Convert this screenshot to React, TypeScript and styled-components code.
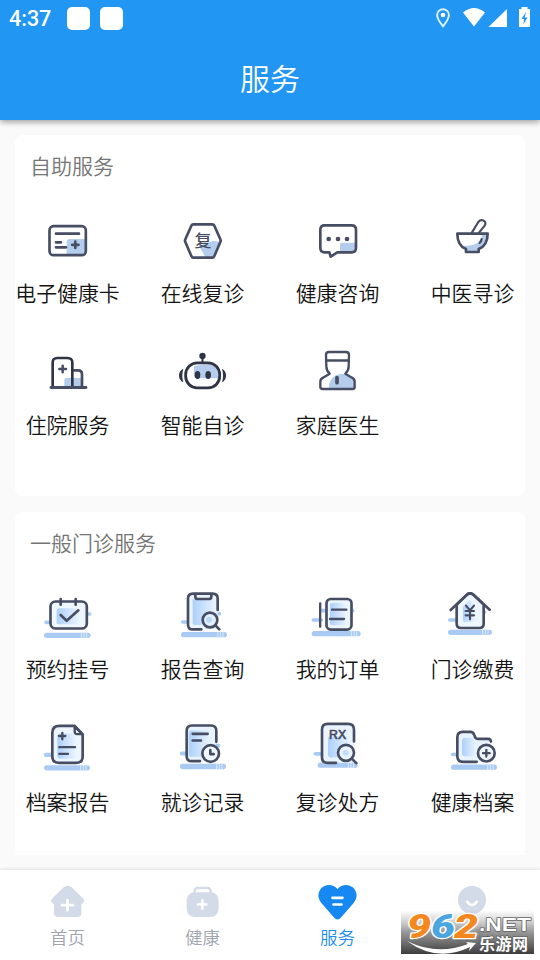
import React from "react";
import styled, { createGlobalStyle } from "styled-components";

const INK = "#474e64";
const DARK = "#2f3546";
const TINT = "#b4cdec";
const BAR = "#a9cbf3";

const Global = createGlobalStyle`
  * { box-sizing: border-box; }
  body { margin: 0; background: #fafafa; }
`;

const Screen = styled.div`
  width: 540px;
  height: 960px;
  display: flex;
  flex-direction: column;
  overflow: hidden;
  background: #fafafa;
  font-family: "Noto Sans CJK SC", sans-serif;
  font-weight: 350;
  color: #141414;
`;

const Header = styled.header`
  height: 120px;
  flex: none;
  z-index: 1;
  display: flex;
  flex-direction: column;
  background: #2196f3;
  color: #fff;
  box-shadow: 0 2px 6px rgba(0, 0, 0, 0.38);
`;

const StatusBar = styled.div`
  height: 38px;
  display: flex;
  align-items: center;
  padding: 0 10px 0 9px;
`;

const Clock = styled.span`
  width: 58px;
  font: 500 21.5px/38px Roboto, sans-serif;
`;

const Notice = styled.span`
  width: 23px;
  height: 23px;
  margin: 0 10px 1px 0;
  border-radius: 5px;
  background: #fff;
`;

const StatusIcons = styled.svg`
  width: 97px;
  height: 38px;
  margin-left: auto;
`;

const Title = styled.h1`
  margin: 0;
  text-align: center;
  font-size: 30px;
  font-weight: 350;
  line-height: 79px;
`;

const Content = styled.main`
  flex: 1;
  min-height: 0;
  display: flex;
  flex-direction: column;
  gap: 16px;
  padding: 15px 15px 0;
`;

const Card = styled.section<{ $height: number; $cut?: boolean }>`
  flex: none;
  height: ${(p) => p.$height}px;
  border-radius: ${(p) => (p.$cut ? "8px 8px 0 0" : "8px")};
  background: #fff;
`;

const CardTitle = styled.h2<{ $space: number }>`
  margin: 0 0 ${(p) => p.$space}px;
  padding: 15px 15px 0;
  font-size: 21px;
  line-height: 30px;
  font-weight: 350;
  color: #757575;
`;

const Grid = styled.div<{ $pitch: number }>`
  margin: 0 -15px;
  display: grid;
  grid-template-columns: repeat(4, 135px);
  grid-auto-rows: ${(p) => p.$pitch}px;
`;

const Service = styled.div`
  display: flex;
  flex-direction: column;
  align-items: center;
  gap: 9px;
`;

const ServiceIcon = styled.svg`
  width: 61px;
  height: 56px;
  overflow: visible;
  fill: none;
  stroke: ${INK};
  stroke-width: 8;
  stroke-linecap: round;
  stroke-linejoin: round;
`;

const Label = styled.span`
  font-size: 20.9px;
  line-height: 24px;
  white-space: nowrap;
`;

const NavBar = styled.nav`
  height: 90px;
  flex: none;
  display: grid;
  grid-template-columns: repeat(4, 1fr);
  background: #fff;
  box-shadow: 0 -1px 3px rgba(0, 0, 0, 0.1);
`;

const NavItem = styled.div<{ $active?: boolean }>`
  display: flex;
  flex-direction: column;
  align-items: center;
  padding-top: 10px;
  font-size: 17.5px;
  line-height: 24px;
  color: ${(p) => (p.$active ? "#1b8cf0" : "#a0a5b0")};
`;

const NavIcon = styled.svg`
  width: 45px;
  height: 45px;
`;

const Watermark = styled.svg`
  position: absolute;
  left: 401px;
  top: 910px;
  width: 133px;
  height: 44px;
`;

const Pencil = ({ x, y, w = 140 }: { x: number; y: number; w?: number }) => (
  <g stroke="none">
    <rect x={x} y={y - 8} width={w} height={16} rx={8} fill={BAR} />
    <path d={`M${x + w - 28} ${y - 8}v16M${x + w - 20} ${y - 8}v16M${x + w - 12} ${y - 8}v16`} stroke="#e4f0ff" strokeWidth={2.5} strokeLinecap="butt" />
  </g>
);

type Item = { label: string; x: number; y: number; art: React.ReactNode };

const selfService: Item[] = [
  {
    label: "电子健康卡", x: 111, y: 255,
    art: (
      <>
        <path d="M200 373V337q0-10 10-10h48v46z" fill={TINT} stroke="none" />
        <rect x="148.5" y="288.500" width="109" height="87" rx="12" />
        <path d="M168 311h69M168 337h15M168 352h30M226 335v19M216.500 344.500h19" />
      </>
    ),
  },
  {
    label: "在线复诊", x: 516, y: 255,
    art: (
      <>
        <path d="M597 347l43-15 18 4-21 45h-21z" fill={TINT} stroke="none" />
        <path d="M580 283h57q4 0 6 4l18 41q2 4 0 8l-18 42q-2 5-6 5h-57q-4 0-6-5l-18-42q-2-4 0-8l18-41q2-4 6-4z" />
        <text x="609" y="351" textAnchor="middle" fontSize="51" fontWeight="500" fill={INK} stroke="none">复</text>
      </>
    ),
  },
  {
    label: "健康咨询", x: 111, y: 255,
    art: (
      <>
        <path d="M210 366V343q0-5 5-5h42v28z" fill={TINT} stroke="none" />
        <path d="M164 286h81q13 0 13 13v55q0 13-13 13h-43l-20 13-4-13h-14q-13 0-13-13v-55q0-13 13-13z" />
        <g fill={INK} stroke="none"><circle cx="176" cy="327" r="7" /><circle cx="204" cy="327" r="7" /><circle cx="231" cy="327" r="7" /></g>
      </>
    ),
  },
  {
    label: "中医寻诊", x: 516, y: 255,
    art: (
      <>
        <path d="M582 347q30 1 42-10 16-16 10-25h19q1 34-27 45v9h-38v-9z" fill={TINT} stroke="none" />
        <path d="M562 311h91q0 35-27 46v9h-38v-9q-26-11-26-46z" />
        <path d="M606 307l19-31q7-9 16-4 9 6 3 15l-17 21M635 327q-1 7-6 12" strokeWidth="6.500" />
      </>
    ),
  },
  {
    label: "住院服务", x: 111, y: 81,
    art: (
      <>
        <path d="M193 200V180q0-6 6-6h46v26z" fill={TINT} stroke="none" />
        <path d="M219 151h15q12 0 12 12v37" strokeWidth="8" />
        <path d="M158 200V128q0-14 14-14h30q15 0 15 14v72" stroke={DARK} strokeWidth="8" />
        <path d="M153 202.500h105" strokeWidth="8.500" />
        <path d="M188 137v20M178 147h20" strokeWidth="7.500" />
      </>
    ),
  },
  {
    label: "智能自诊", x: 516, y: 81,
    art: (
      <g stroke={DARK}>
        <path d="M582 166v-28q20-5 42-5 32 4 32 37v5h-66q-8-2-8-9z" fill={TINT} stroke="none" />
        <rect x="557" y="128.500" width="102" height="75" rx="35" strokeWidth="8.500" />
        <path d="M607.500 108v20" strokeWidth="6" />
        <g fill={DARK} stroke="none">
          <circle cx="607.500" cy="108" r="9.500" />
          <ellipse cx="592.500" cy="165" rx="8.500" ry="12" />
          <ellipse cx="624.500" cy="165" rx="8.500" ry="12" />
          <path d="M550 146q-13 6-13 20.500t13 20.500q-6-20 0-41zM666 146q12 6 12 20.500t-12 20.500q6-20 0-41z" />
        </g>
      </g>
    ),
  },
  {
    label: "家庭医生", x: 111, y: 81,
    art: (
      <>
        <path d="M176 206q0-28 22-40 15-8 32-3l17 10q6 3 6 10v23z" fill={TINT} stroke="none" />
        <path d="M168 105q0-9 9-9h51q9 0 9 9l-1 34q0 13-10 22l20 12q8 4 8 12v16q0 6-6 6h-90q-7 0-7-6v-16q0-8 8-12l20-12q-10-9-10-22zM168 121.500h69" strokeWidth="7" />
        <path d="M201 173v15" strokeWidth="11" />
      </>
    ),
  },
];

const clinic: Item[] = [
  {
    label: "预约挂号", x: 111, y: 243,
    art: (
      <>
        <path d="M138 337h20M258 312h11" stroke={BAR} strokeWidth="11" />
        <Pencil x={132} y={376} />
        <rect x="151.500" y="274.500" width="109" height="81" rx="15" fill="#eef6ff" />
        <rect x="170" y="295" width="68" height="48" rx="8" fill="url(#tone)" stroke="none" />
        <path d="M182 267v17M227 267v17M182 315l18 17 35-31" />
      </>
    ),
  },
  {
    label: "报告查询", x: 516, y: 243,
    art: (
      <>
        <path d="M548 336h18M652 311h6" stroke={BAR} strokeWidth="11" />
        <Pencil x={543} y={374} w={138} />
        <path d="M563 260q0-10 12-10h64q14 0 14 14v94h-77q-13 0-13-13z" fill="#eaf4ff" stroke="none" />
        <rect x="578" y="265" width="70" height="80" rx="8" fill="url(#tone)" stroke="none" />
        <path d="M604 358h-26q-14 0-14-14v-78q0-15 15-15h59q15 0 15 15v34" />
        <path d="M586 254v6q0 7 8 7h32q8 0 8-7v-6" />
        <circle cx="630" cy="330" r="22" fill="#e4f0ff" /><circle cx="627" cy="329" r="9" fill="#b9d7fa" stroke="none" />
        <path d="M647 347l11 11" />
      </>
    ),
  },
  {
    label: "我的订单", x: 111, y: 243,
    art: (
      <>
        <path d="M130 330h24M153 302h12M240 302h8" stroke={BAR} strokeWidth="11" />
        <Pencil x={125} y={371} w={147} />
        <path d="M150.500 280v70" strokeWidth="7" />
        <rect x="169.500" y="267" width="75" height="92" rx="13" fill="#edf6ff" />
        <rect x="180" y="278" width="48" height="68" rx="8" fill="url(#tone)" stroke="none" />
        <path d="M186 299h43M180 327h42" strokeWidth="7" />
      </>
    ),
  },
  {
    label: "门诊缴费", x: 516, y: 243,
    art: (
      <>
        <path d="M539 330h22M642 307h2" stroke={BAR} strokeWidth="11" />
        <Pencil x={534} y={367} w={132} />
        <path d="M560 284l32-31q8-6 17 0l32 31v57q0 13-13 13h-55q-13 0-13-13z" fill="#edf6ff" />
        <path d="M579 290l21-20 14 15v51h-29q-6 0-6-7z" fill="url(#tone)" stroke="none" />
        <path d="M542 300l50-47q8-6 17 0l50 46" />
        <path d="M588 287l12 14 12-14M600 301v27M587 303h25M587 316h25" strokeWidth="6.500" />
      </>
    ),
  },
  {
    label: "档案报告", x: 111, y: 103.5,
    art: (
      <>
        <path d="M138 196h20" stroke={BAR} strokeWidth="13" />
        <Pencil x={132} y={235} w={138} />
        <path d="M178 109h46l24 26v66q0 19-19 19h-52q-20 0-20-19v-71q0-21 21-21z" fill="#edf6ff" />
        <rect x="172" y="132" width="55" height="76" rx="10" fill="url(#tone)" stroke="none" />
        <path d="M224 110v16q0 8 8 8h15zM187 130v19M177 139.500h19M178 173h47M178 193h26" strokeWidth="7" />
      </>
    ),
  },
  {
    label: "就诊记录", x: 516, y: 103.5,
    art: (
      <>
        <path d="M545 192h18M651 169h4" stroke={BAR} strokeWidth="12" />
        <Pencil x={540} y={231} w={138} />
        <rect x="560" y="109" width="88" height="105" rx="15" fill="#e8f3ff" stroke="none" />
        <rect x="566" y="123" width="65" height="79" rx="8" fill="url(#tone)" stroke="none" />
        <path d="M600 215h-25q-15 0-15-15v-76q0-16 16-16h57q16 0 16 16v33M578 133h45M578 153h25" />
        <circle cx="632" cy="192" r="25" fill="#f1f8ff" /><path d="M631 182v12h10" />
      </>
    ),
  },
  {
    label: "复诊处方", x: 111, y: 103.5,
    art: (
      <>
        <path d="M136 193h20" stroke={BAR} strokeWidth="11" />
        <Pencil x={143} y={227} w={120} />
        <rect x="156" y="104" width="96" height="116" rx="17" fill="#eaf4ff" stroke="none" />
        <rect x="174" y="140" width="64" height="64" rx="8" fill="url(#tone)" stroke="none" />
        <path d="M198 220h-26q-16 0-16-16v-84q0-17 17-17h61q18 0 18 17v36" />
        <text x="203" y="149" textAnchor="middle" fontFamily="Liberation Sans" fontSize="37" fill={INK} stroke={INK} strokeWidth="2">RX</text>
        <circle cx="228" cy="190" r="24" fill="#eaf4ff" /><circle cx="227" cy="190" r="9" fill="#c4ddfa" stroke="none" />
        <path d="M246 208l13 13" strokeWidth="8" />
      </>
    ),
  },
  {
    label: "健康档案", x: 516, y: 103.5,
    art: (
      <>
        <path d="M548 195h18" stroke={BAR} strokeWidth="11" />
        <Pencil x={543} y={233} w={138} />
        <path d="M577 126h28q7 0 11 8l6 12h32q10 0 10 10v61h-85q-17 0-17-17v-58q0-16 15-16z" fill="#e9f3ff" stroke="none" />
        <rect x="576" y="145" width="42" height="55" rx="9" fill="url(#tone)" stroke="none" />
        <path d="M620 217h-40q-18 0-18-17v-57q0-16 16-16h24q7 0 10 8l5 11q2 2 6 2h32q7 0 8 8" />
        <circle cx="649" cy="191" r="25" fill="#eef6ff" /><path d="M649 181v20M639 191h20" strokeWidth="7" />
      </>
    ),
  },
];

const ServiceGrid = ({ items, pitch }: { items: Item[]; pitch: number }) => (
  <Grid $pitch={pitch}>
    {items.map((i) => (
      <Service key={i.label}>
        <ServiceIcon viewBox={`${i.x} ${i.y} 183 168`}>
          <defs>
            <linearGradient id="tone">
              <stop offset="0" stopColor="#acd0fa" />
              <stop offset="1" stopColor="#eaf4ff" />
            </linearGradient>
          </defs>
          {i.art}
        </ServiceIcon>
        <Label>{i.label}</Label>
      </Service>
    ))}
  </Grid>
);

export default function App() {
  return (
    <Screen>
      <Global />
      <Header>
        <StatusBar>
          <Clock>4:37</Clock>
          <Notice />
          <Notice />
          <StatusIcons viewBox="433 0 97 38" fill="#fff">
            <path d="M443 9.200a5.900 5.900 0 0 0-5.900 5.900c0 4.200 5.900 11.200 5.900 11.200s5.900-7 5.900-11.200a5.900 5.900 0 0 0-5.900-5.900z" fill="none" stroke="#dff3ff" strokeWidth="1.900" />
            <circle cx="443" cy="15" r="2.300" />
            <path d="M463 12.500q11-9 22 0L474 26.500zM507 9v18h-18.500zM519 9h2.500V7h6v2h2.500v18h-11z" />
            <path d="M526 12l-4.500 7h2.600l-.8 5.500 4.200-7h-2.700z" fill="#2196f3" />
          </StatusIcons>
        </StatusBar>
        <Title>服务</Title>
      </Header>
      <Content>
        <Card $height={361}>
          <CardTitle $space={35}>自助服务</CardTitle>
          <ServiceGrid items={selfService} pitch={132} />
        </Card>
        <Card $height={343} $cut>
          <CardTitle $space={34}>一般门诊服务</CardTitle>
          <ServiceGrid items={clinic} pitch={133} />
        </Card>
      </Content>
      <NavBar>
        <NavItem>
          <NavIcon viewBox="134 90 135 135" fill="#d3dae8">
            <path d="M190 112q12-9 24 0l35 34q6 7-1 13l-5 4v26q0 12-12 12h-58q-12 0-12-12v-26l-5-4q-7-6-1-13z" />
            <path d="M201.500 150v31M185 165.500h33" stroke="#fff" strokeWidth="8" strokeLinecap="round" />
          </NavIcon>
          首页
        </NavItem>
        <NavItem>
          <NavIcon viewBox="541 90 135 135" fill="#d3dae8">
            <rect x="561" y="127" width="96" height="74" rx="24" />
            <path d="M585 130v-6q0-10 10-10h28q10 0 10 10v6" fill="none" stroke="#d3dae8" strokeWidth="7" />
            <path d="M590 122h37" stroke="#fff" strokeWidth="7" />
            <path d="M608 151v25M595 163.500h25" stroke="#fff" strokeWidth="8" strokeLinecap="round" />
          </NavIcon>
          健康
        </NavItem>
        <NavItem $active>
          <NavIcon viewBox="0 0 45 45">
            <path d="M22.500 9C18 3.500 10 4 6 8.500c-4.200 5-2.800 11 1 15.300L19 37.500q3.500 4 7 0l12-13.700c3.800-4.300 5.200-10.300 1-15.300-4-4.500-12-5-16.500.5z" fill="#1688f2" />
            <path d="M17.500 17.800h10M18.500 24.500h8" stroke="#fff" strokeWidth="2.700" strokeLinecap="round" />
          </NavIcon>
          服务
        </NavItem>
        <NavItem>
          <NavIcon viewBox="0 0 45 45">
            <circle cx="22" cy="20" r="14" fill="#d3dae8" />
            <path d="M17 21.500q5 7 10 0" fill="none" stroke="#fff" strokeWidth="2.600" strokeLinecap="round" />
          </NavIcon>
          我的
        </NavItem>
      </NavBar>
      <Watermark viewBox="0 0 133 44">
        <defs>
          <linearGradient id="shade" x1="0" y1="0" x2="0" y2="1">
            <stop offset="0" stopColor="#aaa" stopOpacity="0" />
            <stop offset="0.500" stopColor="#858585" stopOpacity="0.850" />
            <stop offset="1" stopColor="#3c3c3c" stopOpacity="1" />
          </linearGradient>
        </defs>
        <rect width="133" height="44" fill="url(#shade)" />
        <path d="M6 31Q36 53 69 37l-1 4 7-8-10-1 2 2Q36 46 6 31z" fill="#fff" />
        <g fontFamily="Liberation Sans" fontWeight="700" strokeLinejoin="round" paintOrder="stroke">
          <g fontFamily="Roboto" fontWeight="900" fontStyle="italic" fontSize="33" stroke="#fff" strokeWidth="2.500">
            <text x="6" y="27.500" textLength="24" lengthAdjust="spacingAndGlyphs" fill="#f5871f">9</text>
            <text x="53" y="27.500" textLength="24" lengthAdjust="spacingAndGlyphs" fill="#f5871f">2</text>
            <text x="30" y="27.500" textLength="24" lengthAdjust="spacingAndGlyphs" fill="#4ba6e0">6</text>
          </g>
          <text x="78" y="20.500" fontSize="18.500" textLength="52" lengthAdjust="spacingAndGlyphs" fill="#fff" stroke="#666" strokeWidth="1.400">.NET</text>
        </g>
        <text x="78" y="39.500" fontFamily="Noto Sans CJK SC" fontWeight="700" fontSize="16" textLength="49" fill="#fff" stroke="#555" strokeWidth="1.200" paintOrder="stroke">乐游网</text>
      </Watermark>
    </Screen>
  );
}
